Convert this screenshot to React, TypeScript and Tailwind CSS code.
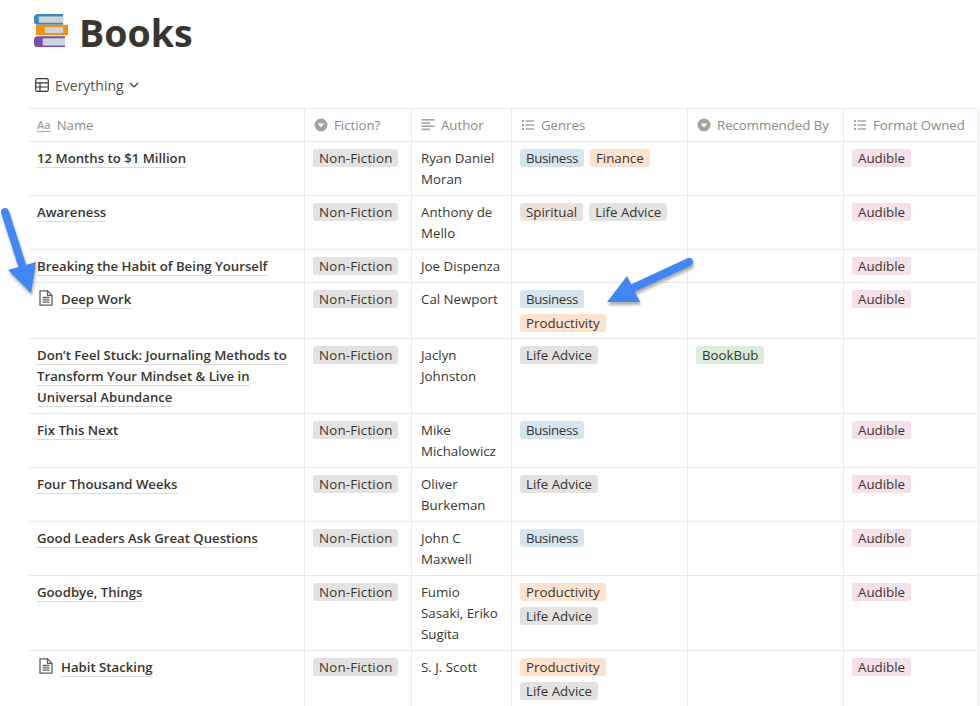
const FONT = "font-['Open_Sans','Noto_Sans',sans-serif]";

const TAG = {
  nonfic: "bg-[#e3e2e0] tracking-[0.2px]",
  business: "bg-[#d3e5ef] tracking-[-0.35px]",
  finance: "bg-[#ffe2cc]",
  productivity: "bg-[#ffe2cc]",
  spiritual: "bg-[#eee0da]",
  life: "bg-[#e3e2e0]",
  audible: "bg-[#f5e0e9]",
  bookbub: "bg-[#dbeddb]",
};

type TagKey = keyof typeof TAG;

const LABEL: Record<TagKey, string> = {
  nonfic: "Non-Fiction",
  business: "Business",
  finance: "Finance",
  productivity: "Productivity",
  spiritual: "Spiritual",
  life: "Life Advice",
  audible: "Audible",
  bookbub: "BookBub",
};

type Row = {
  name: string[];
  page?: boolean;
  author: string[];
  genres: TagKey[];
  rec?: TagKey;
  format?: TagKey;
  h: string;
};

const rows: Row[] = [
  { name: ["12 Months to $1 Million"], author: ["Ryan Daniel", "Moran"], genres: ["business", "finance"], format: "audible", h: "h-[54px]" },
  { name: ["Awareness"], author: ["Anthony de", "Mello"], genres: ["spiritual", "life"], format: "audible", h: "h-[54px]" },
  { name: ["Breaking the Habit of Being Yourself"], author: ["Joe Dispenza"], genres: [], format: "audible", h: "h-[33px]" },
  { name: ["Deep Work"], page: true, author: ["Cal Newport"], genres: ["business", "productivity"], format: "audible", h: "h-[56px]" },
  { name: ["Don’t Feel Stuck: Journaling Methods to", "Transform Your Mindset & Live in", "Universal Abundance"], author: ["Jaclyn", "Johnston"], genres: ["life"], rec: "bookbub", h: "h-[75px]" },
  { name: ["Fix This Next"], author: ["Mike", "Michalowicz"], genres: ["business"], format: "audible", h: "h-[54px]" },
  { name: ["Four Thousand Weeks"], author: ["Oliver", "Burkeman"], genres: ["life"], format: "audible", h: "h-[54px]" },
  { name: ["Good Leaders Ask Great Questions"], author: ["John C", "Maxwell"], genres: ["business"], format: "audible", h: "h-[54px]" },
  { name: ["Goodbye, Things"], author: ["Fumio", "Sasaki, Eriko", "Sugita"], genres: ["productivity", "life"], format: "audible", h: "h-[75px]" },
  { name: ["Habit Stacking"], page: true, author: ["S. J. Scott"], genres: ["productivity", "life"], format: "audible", h: "h-[56px]" },
];

function Tag({ k }: { k: TagKey }) {
  return (
    <span className={`block h-[18px] rounded-[3px] px-[6px] text-[13.3px] leading-[18px] whitespace-nowrap text-[#37352f] ${TAG[k]}`}>
      {LABEL[k]}
    </span>
  );
}

function BooksIcon() {
  return (
    <svg width="35" height="35" viewBox="0 0 36 36" className="shrink-0 -mt-[5px]">
      <path d="M5 1h26v11H5a4 4 0 0 1-4-4V5a4 4 0 0 1 4-4z" fill="#3b88c3" />
      <rect x="6" y="3.5" width="25" height="6.5" fill="#ccd6dd" />
      <path d="M3 12h33v11H3z" fill="#f4900c" />
      <rect x="12" y="14.5" width="19" height="6" fill="#ccd6dd" />
      <path d="M5 24h28v11H5a4 4 0 0 1-4-4v-3a4 4 0 0 1 4-4z" fill="#744eaa" />
      <rect x="10" y="26" width="23" height="7.5" fill="#ccd6dd" />
    </svg>
  );
}

function TableIcon() {
  return (
    <svg width="14" height="14" viewBox="0 0 14 14" fill="none" stroke="#37352f" strokeWidth="1.2">
      <rect x="0.7" y="0.7" width="12.6" height="12.6" rx="1.6" />
      <path d="M0.7 4.8h12.6M0.7 9h12.6M5 4.8v8.5" />
    </svg>
  );
}

function SelectIcon() {
  return (
    <svg width="14" height="14" viewBox="0 0 14 14">
      <circle cx="7" cy="7" r="6.5" fill="#a5a29c" />
      <path d="M3.6 5.4h6.8L7 9.6z" fill="#fff" />
    </svg>
  );
}

function ListIcon() {
  return (
    <svg width="14" height="14" viewBox="0 0 14 14" fill="#a5a29c">
      <rect x="1" y="2" width="2" height="2" />
      <rect x="1" y="6" width="2" height="2" />
      <rect x="1" y="10" width="2" height="2" />
      <rect x="4.5" y="2.3" width="8.5" height="1.4" />
      <rect x="4.5" y="6.3" width="8.5" height="1.4" />
      <rect x="4.5" y="10.3" width="8.5" height="1.4" />
    </svg>
  );
}

function TextIcon() {
  return (
    <svg width="14" height="14" viewBox="0 0 14 14" fill="#a5a29c">
      <rect x="0.5" y="1" width="13" height="1.6" />
      <rect x="0.5" y="4.2" width="8.5" height="1.6" />
      <rect x="0.5" y="7.4" width="13" height="1.6" />
      <rect x="0.5" y="10.6" width="8.5" height="1.6" />
    </svg>
  );
}

function PageIcon() {
  return (
    <svg width="14" height="16" viewBox="0 0 14 16" fill="none" stroke="#5f5e59" strokeWidth="1.3" className="shrink-0">
      <path d="M1 .8h7.5L13 5.3v9.9H1z" />
      <path d="M8.5 .8v4.5H13" />
      <path d="M3.5 7.5h7M3.5 9.8h7M3.5 12.1h7" />
    </svg>
  );
}

function Arrow({ className, d, head }: { className: string; d: string; head: string }) {
  return (
    <svg width="110" height="100" viewBox="0 0 110 100" className={`absolute ${className}`}>
      <g opacity="0.4" transform="translate(1 3)" className="blur-[1.5px]">
        <path d={d} stroke="#333" strokeWidth="8" strokeLinecap="round" fill="none" />
        <path d={head} fill="#333" />
      </g>
      <path d={d} stroke="#4088f5" strokeWidth="8" strokeLinecap="round" fill="none" />
      <path d={head} fill="#4088f5" />
    </svg>
  );
}

const colName = "w-[276px]";
const colFic = "w-[107px]";
const colAuthor = "w-[100px]";
const colGenres = "w-[176px]";
const colRec = "w-[156px]";
const colFormat = "w-[135px]";

function Head({ w, icon, label }: { w: string; icon: React.ReactNode; label: string }) {
  return (
    <div className={`${w} shrink-0 flex items-center gap-[6px] pl-[9px] border-r border-[#e9e9e7] text-[13.2px] text-[#8b8a85]`}>
      {icon}
      <span className="pt-[1px]">{label}</span>
    </div>
  );
}

export default function App() {
  return (
    <div className={`relative h-[706px] w-[980px] overflow-hidden bg-white ${FONT}`}>
      <div className="flex items-center gap-[11px] pl-[33px] pt-[12px] h-[54px]">
        <BooksIcon />
        <div className="text-[37.5px] leading-[42px] font-bold text-[#37352f]">Books</div>
      </div>

      <div className="flex items-center gap-[6px] pl-[35px] mt-[22px] h-[18px] text-[14px] font-medium text-[#55534e]">
        <TableIcon />
        <span>Everything</span>
        <svg width="10" height="10" viewBox="0 0 10 10" fill="none" stroke="#37352f" strokeWidth="1.2" className="-ml-[1px]">
          <path d="M1 3l4 4 4-4" />
        </svg>
      </div>

      <div className="ml-[29px] mt-[14px] w-[950px]">
        <div className="flex h-[34px] border-y border-[#e9e9e7]">
          <div className={`${colName} shrink-0 flex items-center gap-[6px] pl-[8px] border-r border-[#e9e9e7] text-[13.2px] text-[#8b8a85]`}>
            <span className="text-[11px] font-semibold leading-[12px] underline underline-offset-2 text-[#a5a29c]">Aa</span>
            <span className="pt-[1px]">Name</span>
          </div>
          <Head w={colFic} icon={<SelectIcon />} label="Fiction?" />
          <Head w={colAuthor} icon={<TextIcon />} label="Author" />
          <Head w={colGenres} icon={<ListIcon />} label="Genres" />
          <Head w={colRec} icon={<SelectIcon />} label="Recommended By" />
          <Head w={colFormat} icon={<ListIcon />} label="Format Owned" />
        </div>

        {rows.map((r) => (
          <div key={r.name[0]} className={`flex ${r.h} border-b border-[#e9e9e7] text-[13.3px] leading-[21px] text-[#37352f]`}>
            <div className={`${colName} shrink-0 border-r border-[#e9e9e7] pl-[8px] pt-[6px] flex gap-[8px] text-[13.2px] font-semibold`}>
              {r.page && <div className="pt-[1px] pl-[2px]"><PageIcon /></div>}
              <div>
                {r.name.map((l) => (
                  <div key={l}>
                    <span className="border-b border-[#dcdbd9] whitespace-nowrap">{l}</span>
                  </div>
                ))}
              </div>
            </div>
            <div className={`${colFic} shrink-0 border-r border-[#e9e9e7] pl-[8px] pt-[7px] flex items-start`}>
              <Tag k="nonfic" />
            </div>
            <div className={`${colAuthor} shrink-0 border-r border-[#e9e9e7] pl-[9px] pt-[6px]`}>
              {r.author.map((l) => (
                <div key={l} className="whitespace-nowrap">{l}</div>
              ))}
            </div>
            <div className={`${colGenres} shrink-0 border-r border-[#e9e9e7] pl-[8px] pr-[18px] pt-[7px] flex flex-wrap content-start gap-[6px]`}>
              {r.genres.map((g) => (
                <Tag key={g} k={g} />
              ))}
            </div>
            <div className={`${colRec} shrink-0 border-r border-[#e9e9e7] pl-[8px] pt-[7px] flex items-start`}>
              {r.rec && <Tag k={r.rec} />}
            </div>
            <div className={`${colFormat} shrink-0 border-r border-[#e9e9e7] pl-[8px] pt-[7px] flex items-start`}>
              {r.format && <Tag k={r.format} />}
            </div>
          </div>
        ))}
      </div>

      {/* annotation arrows */}
      <Arrow
        className="left-0 top-[205px]"
        d="M5 7L22 60"
        head="M8 65L36 57L31 88z"
      />
      <Arrow
        className="left-[600px] top-[250px]"
        d="M89 12L33 38"
        head="M27 26L7 52L40 52z"
      />
    </div>
  );
}
